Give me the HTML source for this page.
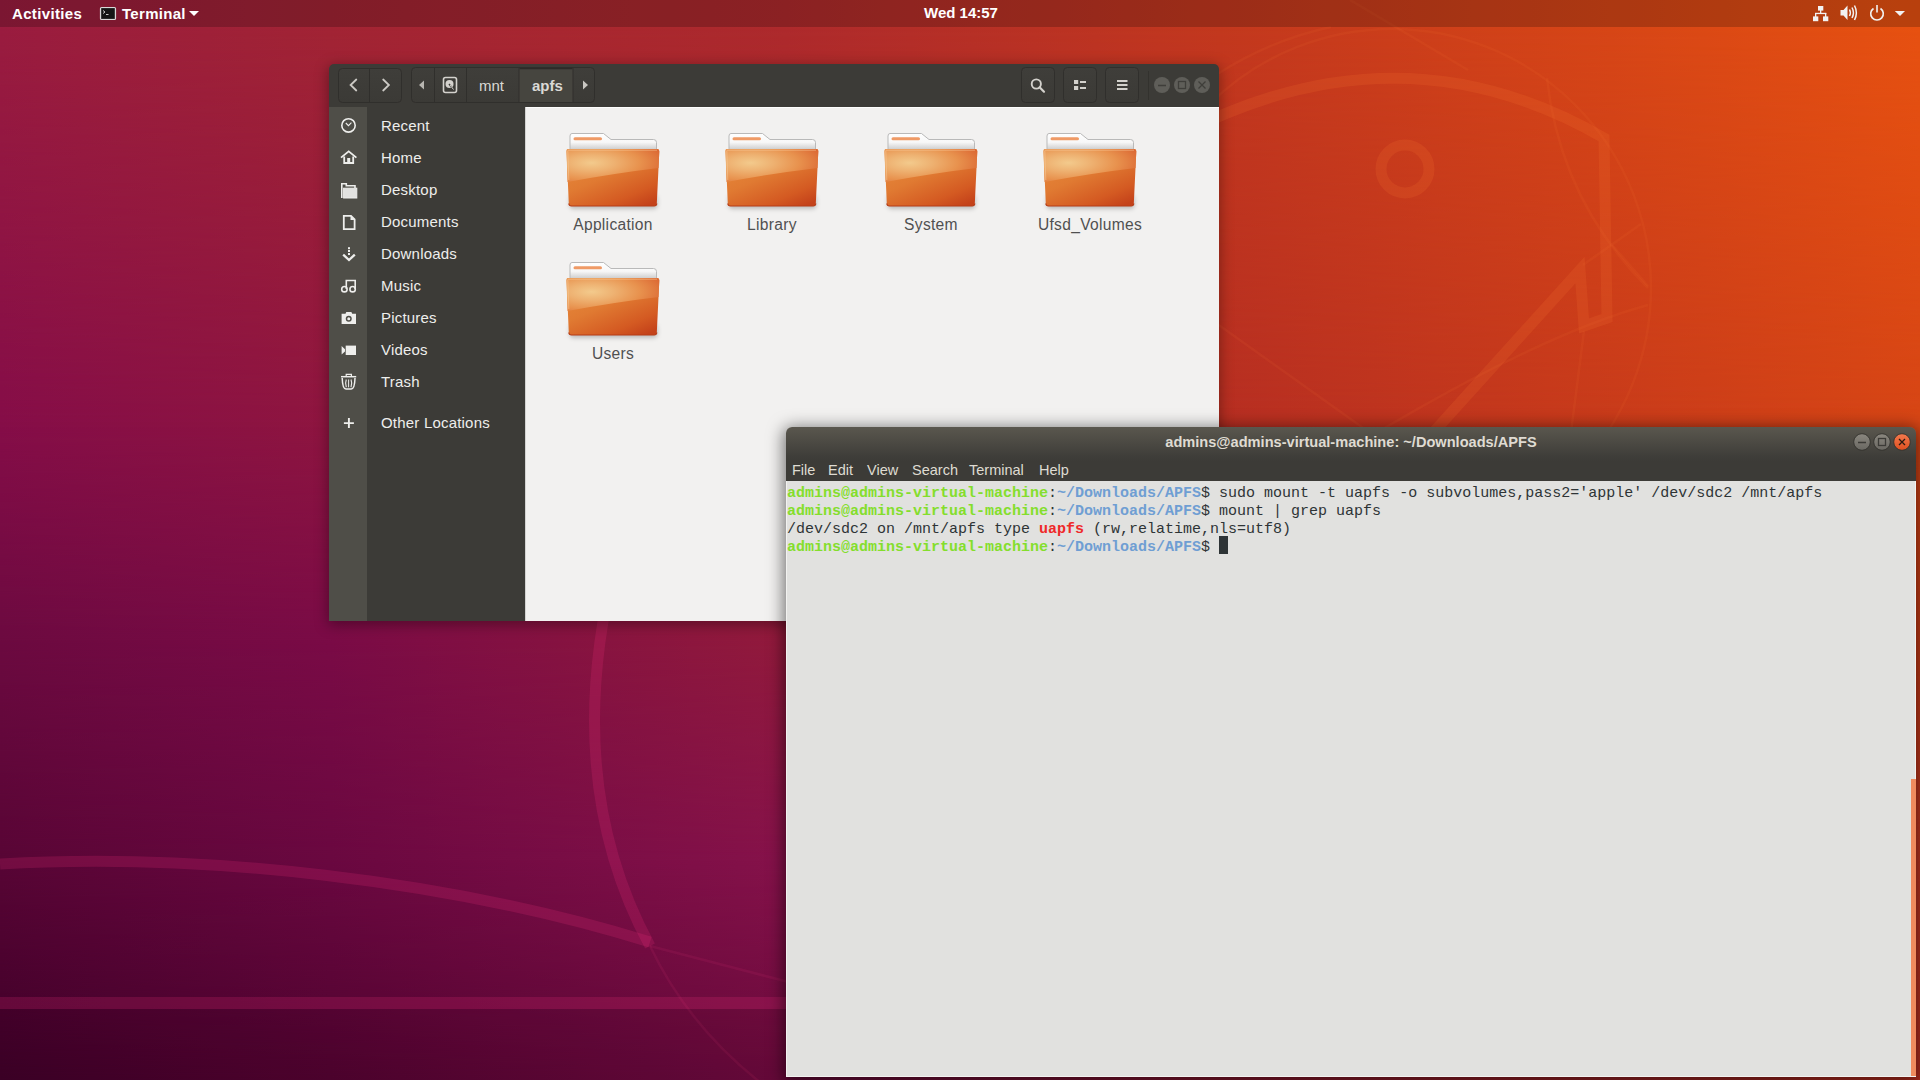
<!DOCTYPE html>
<html><head><meta charset="utf-8">
<style>
*{margin:0;padding:0;box-sizing:border-box}
html,body{width:1920px;height:1080px;overflow:hidden}
body{position:relative;font-family:"Liberation Sans",sans-serif;background:#8a1a3a}
svg{display:block}
#wall{position:absolute;left:0;top:0}
#topbar{position:absolute;left:0;top:0;width:1920px;height:27px;background:rgba(0,0,0,0.2);color:#fff;font-weight:bold;font-size:15px}
#topbar span{position:absolute;top:5px;white-space:nowrap;line-height:17px}
#topicons{position:absolute;left:0;top:0}
/* file manager */
#fm{position:absolute;left:329px;top:64px;width:890px;height:557px;border-radius:5px 5px 0 0;overflow:hidden}
#fmshadow{position:absolute;left:329px;top:64px;width:890px;height:557px;border-radius:5px 5px 0 0;box-shadow:0 3px 14px 1px rgba(0,0,0,0.35)}
#fmhead{position:absolute;left:0;top:0;width:890px;height:43px;background:#3c3b37}
#fmside{position:absolute;left:0;top:43px;width:196px;height:514px;background:#3c3b37}
#fmicons{position:absolute;left:0;top:0;width:38px;height:514px;background:#4f4e48}
#fmcontent{position:absolute;left:196px;top:43px;width:694px;height:514px;background:#f2f1f0}
.side-item{position:absolute;left:52px;font-size:15px;letter-spacing:0.2px;color:#eeeeec;white-space:nowrap;line-height:18px}
.flabel{position:absolute;width:160px;text-align:center;font-size:15.6px;letter-spacing:0.3px;color:#505050;line-height:18px;white-space:nowrap}
.pb{position:absolute;top:14px;font-size:15px;color:#dad9d5;line-height:18px;white-space:nowrap}
#fmsvg{position:absolute;left:0;top:0}
/* terminal */
#termshadow{position:absolute;left:786px;top:427px;width:1130px;height:650px;border-radius:6px 6px 0 0;box-shadow:0 3px 16px 3px rgba(0,0,0,0.5)}
#term{position:absolute;left:786px;top:427px;width:1130px;height:650px;border-radius:6px 6px 0 0;overflow:hidden}
#termhead{position:absolute;left:0;top:0;width:1130px;height:54px;background:linear-gradient(#5a574e,#3e3d39 30px,#3c3b37 34px,#3c3b37)}
#termbody{position:absolute;left:0;top:54px;width:1130px;height:596px;background:#e1e1df;border-left:1px solid #f2f2f0;border-bottom:1px solid #f2f2f0;border-right:1px solid #f2f2f0}
.ttitle{position:absolute;left:0;width:1130px;top:7px;text-align:center;color:#dfdbd2;font-weight:bold;font-size:14.6px;line-height:17px;white-space:nowrap}
.menu{position:absolute;top:35px;font-size:14.5px;color:#dfdbd2;line-height:17px;white-space:nowrap}
.tline{position:absolute;left:1px;font-family:"Liberation Mono",monospace;font-size:15px;white-space:pre;color:#2e3436;line-height:18px;height:18px}
.g{color:#84de2c;font-weight:bold}
.b{color:#6f9ed3;font-weight:bold}
.r{color:#ef2929;font-weight:bold}
</style></head><body>
<svg id="wall" width="1920" height="1080" viewBox="0 0 1920 1080">
<defs>
<linearGradient id="r0" x1="0" y1="0" x2="1920" y2="0" gradientUnits="userSpaceOnUse"><stop offset="0.0000" stop-color="#9a1c3f"/><stop offset="0.1719" stop-color="#a22434"/><stop offset="0.4094" stop-color="#ae2a2c"/><stop offset="0.6354" stop-color="#c3381e"/><stop offset="1.0000" stop-color="#e75111"/></linearGradient>
<linearGradient id="r1" x1="0" y1="0" x2="1920" y2="0" gradientUnits="userSpaceOnUse"><stop offset="0.0000" stop-color="#850d48"/><stop offset="0.1719" stop-color="#8e1540"/><stop offset="0.4094" stop-color="#a0222f"/><stop offset="0.6354" stop-color="#b62e22"/><stop offset="1.0000" stop-color="#d64515"/></linearGradient>
<linearGradient id="r2" x1="0" y1="0" x2="1920" y2="0" gradientUnits="userSpaceOnUse"><stop offset="0.0000" stop-color="#6c0a40"/><stop offset="0.1719" stop-color="#7a0b46"/><stop offset="0.4094" stop-color="#921a3c"/><stop offset="0.6354" stop-color="#a82a26"/><stop offset="1.0000" stop-color="#c43a16"/></linearGradient>
<linearGradient id="r3" x1="0" y1="0" x2="1920" y2="0" gradientUnits="userSpaceOnUse"><stop offset="0.0000" stop-color="#580535"/><stop offset="0.1719" stop-color="#6a0840"/><stop offset="0.4094" stop-color="#86124a"/><stop offset="0.6354" stop-color="#a02038"/><stop offset="1.0000" stop-color="#bc3420"/></linearGradient>
<linearGradient id="r4" x1="0" y1="0" x2="1920" y2="0" gradientUnits="userSpaceOnUse"><stop offset="0.0000" stop-color="#3e0028"/><stop offset="0.1719" stop-color="#50032f"/><stop offset="0.4094" stop-color="#6a0a3c"/><stop offset="0.6354" stop-color="#8a1830"/><stop offset="1.0000" stop-color="#b02c1e"/></linearGradient>
<linearGradient id="m1g" x1="0" y1="27" x2="0" y2="427" gradientUnits="userSpaceOnUse"><stop offset="0" stop-color="#fff" stop-opacity="0"/><stop offset="1" stop-color="#fff" stop-opacity="1"/></linearGradient>
<mask id="m1" maskUnits="userSpaceOnUse" x="0" y="0" width="1920" height="1080"><rect x="0" y="27" width="1920" height="1053" fill="url(#m1g)"/></mask>
<linearGradient id="m2g" x1="0" y1="427" x2="0" y2="640" gradientUnits="userSpaceOnUse"><stop offset="0" stop-color="#fff" stop-opacity="0"/><stop offset="1" stop-color="#fff" stop-opacity="1"/></linearGradient>
<mask id="m2" maskUnits="userSpaceOnUse" x="0" y="0" width="1920" height="1080"><rect x="0" y="427" width="1920" height="653" fill="url(#m2g)"/></mask>
<linearGradient id="m3g" x1="0" y1="640" x2="0" y2="860" gradientUnits="userSpaceOnUse"><stop offset="0" stop-color="#fff" stop-opacity="0"/><stop offset="1" stop-color="#fff" stop-opacity="1"/></linearGradient>
<mask id="m3" maskUnits="userSpaceOnUse" x="0" y="0" width="1920" height="1080"><rect x="0" y="640" width="1920" height="440" fill="url(#m3g)"/></mask>
<linearGradient id="m4g" x1="0" y1="860" x2="0" y2="1080" gradientUnits="userSpaceOnUse"><stop offset="0" stop-color="#fff" stop-opacity="0"/><stop offset="1" stop-color="#fff" stop-opacity="1"/></linearGradient>
<mask id="m4" maskUnits="userSpaceOnUse" x="0" y="0" width="1920" height="1080"><rect x="0" y="860" width="1920" height="220" fill="url(#m4g)"/></mask>
</defs>
<rect width="1920" height="1080" fill="url(#r0)"/>
<rect x="0" y="27" width="1920" height="1053" fill="url(#r1)" mask="url(#m1)"/>
<rect x="0" y="427" width="1920" height="653" fill="url(#r2)" mask="url(#m2)"/>
<rect x="0" y="640" width="1920" height="440" fill="url(#r3)" mask="url(#m3)"/>
<rect x="0" y="860" width="1920" height="220" fill="url(#r4)" mask="url(#m4)"/>

<g>
<g fill="none" stroke="rgb(255,128,51)" stroke-opacity="0.15" stroke-width="11" stroke-linejoin="miter">
<path d="M 1180,135 Q 1400,20 1604,138 L 1607,318 L 1584,326 L 1580,270 L 1300,580"/>
<circle cx="1405" cy="169" r="24"/>
</g>
<g fill="none" stroke="rgb(255,55,133)" stroke-opacity="0.17" stroke-width="11" stroke-linejoin="miter">
<path d="M 0,864 C 200,852 450,880 650,942"/>
<path d="M 616,560 Q 560,780 650,946"/>
<path d="M -10,1003 L 1800,1003" stroke-width="12"/>
</g>
<g fill="none" stroke="rgb(255,128,58)" stroke-opacity="0.085" stroke-width="2.5">
<circle cx="1392" cy="288" r="259"/>
<path d="M 1547,78 Q 1560,200 1648,288"/>
<path d="M 1641,224 L 1583,265"/>
<path d="M 1612,245 L 1648,286"/>
<path d="M 1648,305 Q 1520,340 1300,480"/>
<path d="M 1584,331 L 1570,440"/>
<path d="M 1216,75 Q 1270,40 1331,27"/>
<path d="M 1216,323 L 1380,440"/>
<path d="M 1350,0 L 1468,70"/>
</g>
<g fill="none" stroke="rgb(255,64,128)" stroke-opacity="0.09" stroke-width="2.5">
<path d="M 650,946 L 800,985"/>
<path d="M 650,946 Q 690,1030 770,1090"/>
</g>
</g>
<rect x="0" y="1009" width="1800" height="71" fill="#000" fill-opacity="0.05"/>
</svg>

<div id="topbar">
<span style="left:12px;letter-spacing:0.35px">Activities</span>
<span style="left:122px;letter-spacing:0.3px">Terminal</span>
<span style="left:924px;top:4px">Wed 14:57</span>
</div>
<svg id="topicons" width="1920" height="27" viewBox="0 0 1920 27">
<!-- terminal app icon -->
<rect x="100.5" y="7.5" width="15" height="12" rx="1" fill="#2a2a2a" stroke="#d8d8d8" stroke-width="1.2"/>
<rect x="102" y="9" width="12" height="9" fill="#161616"/>
<path d="M103,10.5 L105,12 L103,13.5" stroke="#ddd" stroke-width="0.9" fill="none"/>
<path d="M106,14.5 H108.5" stroke="#ddd" stroke-width="0.9"/>
<path d="M189,11 L199,11 L194,16 Z" fill="#fff"/>
<!-- network -->
<g fill="#f2f2f2">
<rect x="1818" y="6" width="5.3" height="4.6"/>
<rect x="1813" y="16.4" width="5.3" height="4.8"/>
<rect x="1823" y="16.4" width="5.3" height="4.8"/>
<rect x="1820" y="10" width="1.3" height="3.5"/>
<rect x="1815" y="12.8" width="11.3" height="1.3"/>
<rect x="1815" y="13" width="1.3" height="4"/>
<rect x="1825" y="13" width="1.3" height="4"/>
</g>
<!-- volume -->
<path d="M1840.5,10 H1843.5 L1847.5,5.5 V20 L1843.5,15.5 H1840.5 Z" fill="#f2f2f2"/>
<path d="M1849.5,9.5 Q1851.2,12.7 1849.5,16" stroke="#f2f2f2" stroke-width="1.5" fill="none"/>
<path d="M1852,7.5 Q1854.8,12.7 1852,18" stroke="#f2f2f2" stroke-width="1.5" fill="none"/>
<path d="M1854.5,5.5 Q1858.2,12.7 1854.5,20" stroke="#f2f2f2" stroke-width="1.5" fill="none"/>
<!-- power -->
<path d="M1873.5,8.5 A6.3,6.3 0 1 0 1880.5,8.5" stroke="#f2f2f2" stroke-width="1.6" fill="none"/>
<path d="M1877,5 V12.5" stroke="#f2f2f2" stroke-width="1.6"/>
<path d="M1894.8,11 L1905,11 L1900,16 Z" fill="#f2f2f2"/>
</svg>

<div id="fmshadow"></div>
<div id="fm">
<div id="fmhead"></div>
<div id="fmside"><div id="fmicons"></div></div>
<div id="fmcontent"></div>
<svg id="fmsvg" width="890" height="557" viewBox="329 64 890 557">
<defs>
<linearGradient id="btng" x1="0" y1="0" x2="0" y2="1"><stop offset="0" stop-color="#3f3e3a"/><stop offset="1" stop-color="#3b3a36"/></linearGradient>
<radialGradient id="fhl" cx="0.27" cy="0.42" r="0.8">
<stop offset="0" stop-color="#f3ca8c"/><stop offset="0.3" stop-color="#eeb272"/><stop offset="0.65" stop-color="#e8924e"/><stop offset="1" stop-color="#dc6a34"/>
</radialGradient>
<linearGradient id="flow" x1="0.15" y1="0" x2="0.85" y2="1">
<stop offset="0" stop-color="#e88c3c"/><stop offset="0.45" stop-color="#e07a32"/><stop offset="0.8" stop-color="#d45a22"/><stop offset="1" stop-color="#c4421a"/>
</linearGradient>
<linearGradient id="fpaper" x1="0" y1="0" x2="0" y2="1"><stop offset="0" stop-color="#ffffff"/><stop offset="0.3" stop-color="#f7f7f7"/><stop offset="0.53" stop-color="#cfcfcf"/><stop offset="1" stop-color="#b0b0b0"/></linearGradient>
<filter id="fblur" x="-20%" y="-50%" width="140%" height="200%"><feGaussianBlur stdDeviation="2"/></filter>
<symbol id="folder" viewBox="0 0 94 82" width="94" height="82" overflow="visible">
<rect x="3" y="62" width="88" height="14" rx="4" fill="#000" fill-opacity="0.22" filter="url(#fblur)"/>
<path d="M5.5,0.5 H37 L44.5,6.5 H87 Q90,6.5 90,9.5 V30 H3.5 V3 Q3.5,0.5 5.5,0.5 Z" fill="url(#fpaper)" stroke="#b9b9b9" stroke-width="1"/>
<rect x="7" y="4.2" width="28.5" height="3" rx="1.5" fill="#ef9a66"/>
<path d="M1.5,16 H91 Q93,16 92.8,18.5 L90.3,70.5 Q90.1,73 87.6,73 H5 Q2.5,73 2.3,70.5 L0,18.5 Q-0.2,16 1.5,16 Z" fill="url(#flow)"/>
<path d="M1.5,16 H91 Q93,16 92.8,18.5 L92,35 Q50,40 1,49 L0,18.5 Q-0.2,16 1.5,16 Z" fill="url(#fhl)"/>
<path d="M2.3,70.5 Q2.5,73 5,73 H87.6 Q90.1,73 90.3,70.5" fill="none" stroke="#b73c16" stroke-width="1.2"/>
<path d="M2.3,47 L1.3,18 Q1.3,17.2 2.2,17.2 H90.5" fill="none" stroke="#f8c898" stroke-opacity="0.55" stroke-width="1"/>
</symbol>
</defs>
<!-- nav buttons -->
<rect x="338.5" y="68.5" width="63" height="34" rx="4" fill="url(#btng)" stroke="#302f2c"/>
<line x1="369.5" y1="69" x2="369.5" y2="102" stroke="#302f2c"/>
<path d="M356.3,79.5 L350.6,85 L356.3,90.5" fill="none" stroke="#cbc9c4" stroke-width="1.8" stroke-linecap="round"/>
<path d="M383.2,79.5 L388.9,85 L383.2,90.5" fill="none" stroke="#cbc9c4" stroke-width="1.8" stroke-linecap="round"/>
<!-- path bar -->
<rect x="411.5" y="67.5" width="183" height="35" rx="4" fill="url(#btng)" stroke="#302f2c"/>
<rect x="519" y="68" width="54" height="34" fill="#46453f"/>
<line x1="519.5" y1="68.5" x2="572.5" y2="68.5" stroke="#2c2b28" stroke-width="1.5"/>
<line x1="434.5" y1="68" x2="434.5" y2="102" stroke="#302f2c"/>
<line x1="466.5" y1="68" x2="466.5" y2="102" stroke="#302f2c"/>
<line x1="519" y1="68" x2="519" y2="102" stroke="#302f2c"/>
<line x1="573" y1="68" x2="573" y2="102" stroke="#302f2c"/>
<path d="M424,80.5 L419,85 L424,89.5 Z" fill="#b7b5b0"/>
<path d="M583,80.5 L588,85 L583,89.5 Z" fill="#c8c6c1"/>
<rect x="443.5" y="77.5" width="13" height="15" rx="2" fill="none" stroke="#d4d2cd" stroke-width="1.6"/>
<circle cx="449.5" cy="84" r="4" fill="#d4d2cd"/>
<path d="M449,84 L453,89" stroke="#3c3b37" stroke-width="1.4"/>
<path d="M450,85 L453.5,89.5" stroke="#d4d2cd" stroke-width="1"/>
<!-- right buttons -->
<rect x="1021.5" y="67.5" width="33" height="35" rx="4" fill="url(#btng)" stroke="#302f2c"/>
<rect x="1063.5" y="67.5" width="33" height="35" rx="4" fill="url(#btng)" stroke="#302f2c"/>
<rect x="1105.5" y="67.5" width="33" height="35" rx="4" fill="url(#btng)" stroke="#302f2c"/>
<circle cx="1036.3" cy="84" r="4.6" fill="none" stroke="#d3d1cc" stroke-width="1.9"/>
<path d="M1039.6,87.3 L1044,91.7" stroke="#d3d1cc" stroke-width="2.2" stroke-linecap="round"/>
<g fill="#d3d1cc">
<rect x="1074" y="80" width="4.2" height="4"/><rect x="1074" y="86" width="4.2" height="4"/>
<rect x="1080" y="81" width="6" height="2"/><rect x="1080" y="87" width="6" height="2"/>
<rect x="1117" y="80" width="10.5" height="2"/><rect x="1117" y="84" width="10.5" height="2"/><rect x="1117" y="88" width="10.5" height="2"/>
</g>
<line x1="1148.5" y1="71" x2="1148.5" y2="100" stroke="#33322e"/>
<g fill="#5f5e59"><circle cx="1162" cy="85" r="8"/><circle cx="1182" cy="85" r="8"/><circle cx="1202" cy="85" r="8"/></g>
<g stroke="#3f3e3a" stroke-width="1.3" fill="none">
<path d="M1158,85.5 H1166"/><rect x="1178.5" y="81.5" width="7" height="7"/><path d="M1198.5,81.5 L1205.5,88.5 M1205.5,81.5 L1198.5,88.5"/>
</g>
<!-- content border -->
<line x1="525" y1="107.5" x2="1219" y2="107.5" stroke="#fdfdfc"/><line x1="525.5" y1="107" x2="525.5" y2="621" stroke="#d3d3d1"/>
<!-- folders -->
<use href="#folder" x="566.5" y="133"/>
<use href="#folder" x="725.5" y="133"/>
<use href="#folder" x="884.5" y="133"/>
<use href="#folder" x="1043.5" y="133"/>
<use href="#folder" x="566.5" y="262"/>
<!-- sidebar icons -->
<circle cx="348.5" cy="125.4" r="6.7" fill="none" stroke="#eeeeec" stroke-width="1.6"/>
<path d="M345.8,123 L348.5,125.7 L351.4,122.7" fill="none" stroke="#eeeeec" stroke-width="1.1"/>
<path d="M341,157.6 L348.7,151.3 L356.4,157.6" fill="none" stroke="#eeeeec" stroke-width="1.8" stroke-linejoin="miter"/>
<path d="M344.2,156.5 V163 H353.2 V156.5" fill="none" stroke="#eeeeec" stroke-width="1.8"/>
<rect x="347.2" y="158" width="3" height="5.5" fill="#eeeeec"/>
<path d="M341.8,183.8 H346.3 V185.8 H355 V188" fill="none" stroke="#eeeeec" stroke-width="1.6"/>
<path d="M341.8,183 V198" stroke="#eeeeec" stroke-width="1.6"/>
<rect x="343.6" y="188.2" width="13.2" height="9.8" fill="#e2e2e0" stroke="#eeeeec" stroke-width="1"/>
<path d="M343.8,215.8 H351 L354.6,219.4 V229.2 H343.8 Z" fill="none" stroke="#eeeeec" stroke-width="1.8" stroke-linejoin="miter"/>
<path d="M350.5,215.8 L354.6,219.9 H350.5 Z" fill="#eeeeec"/>
<g fill="#eeeeec">
<rect x="348" y="247.2" width="2" height="2"/><rect x="348" y="250" width="2" height="2"/><rect x="348" y="253" width="2" height="2"/>
</g>
<path d="M343.2,254.6 L349,260 L354.8,254.6" fill="none" stroke="#eeeeec" stroke-width="2.3"/>
<g fill="none" stroke="#eeeeec" stroke-width="1.6">
<circle cx="344.4" cy="289.2" r="2.7"/><circle cx="352.6" cy="289.2" r="2.7"/>
<path d="M346.3,289 V280.5 H355.2 V289"/>
</g>
<path d="M341.6,313.8 H345.5 L346.3,312 H351.4 L352.2,313.8 H356 V324 H341.6 Z" fill="#eeeeec"/>
<circle cx="348.75" cy="318.8" r="3" fill="#4f4e48"/><circle cx="348.75" cy="318.8" r="1.5" fill="#eeeeec"/>
<path d="M341.6,346 L345,349.2 V351.6 L341.6,354.6 Z" fill="#eeeeec"/>
<rect x="345.7" y="345.6" width="10.3" height="9.4" fill="#eeeeec"/>
<g fill="none" stroke="#eeeeec" stroke-width="1.5">
<path d="M341,376.7 H356.2"/><path d="M346.2,376.5 V374.4 H351.4 V376.5" stroke-width="1.2"/>
<path d="M342.2,378 Q342.5,389 346,389 H351.2 Q354.7,389 355,378"/>
<path d="M346.3,379.5 Q344.8,383.4 346.3,387.3 M351,379.5 Q352.5,383.4 351,387.3" stroke-width="1.1"/>
<path d="M348.6,379.5 V387.3" stroke-width="1"/>
</g>
<path d="M348.9,418.1 V428.1 M343.9,423.1 H353.9" stroke="#eeeeec" stroke-width="1.9"/>
</svg>
<div class="pb" style="left:150px;top:13px">mnt</div>
<div class="pb" style="left:203px;top:13px;font-weight:bold">apfs</div>
<div class="side-item" style="top:53px">Recent</div>
<div class="side-item" style="top:85px">Home</div>
<div class="side-item" style="top:117px">Desktop</div>
<div class="side-item" style="top:149px">Documents</div>
<div class="side-item" style="top:181px">Downloads</div>
<div class="side-item" style="top:213px">Music</div>
<div class="side-item" style="top:245px">Pictures</div>
<div class="side-item" style="top:277px">Videos</div>
<div class="side-item" style="top:309px">Trash</div>
<div class="side-item" style="top:350px">Other Locations</div>
<div class="flabel" style="left:204px;top:152px">Application</div>
<div class="flabel" style="left:363px;top:152px">Library</div>
<div class="flabel" style="left:522px;top:152px">System</div>
<div class="flabel" style="left:681px;top:152px">Ufsd_Volumes</div>
<div class="flabel" style="left:204px;top:281px">Users</div>
</div>

<div id="termshadow"></div>
<div id="term">
<div id="termhead"></div>
<div id="termbody"></div>
<div class="ttitle">admins@admins-virtual-machine: ~/Downloads/APFS</div>
<svg style="position:absolute;left:0;top:0" width="1130" height="54" viewBox="786 427 1130 54">
<defs>
<linearGradient id="wbg" x1="0" y1="0" x2="0" y2="1"><stop offset="0" stop-color="#8a877f"/><stop offset="1" stop-color="#6a6862"/></linearGradient>
<linearGradient id="wbc" x1="0" y1="0" x2="0" y2="1"><stop offset="0" stop-color="#f27a4e"/><stop offset="1" stop-color="#df4f1f"/></linearGradient>
</defs>
<circle cx="1862" cy="442" r="8.3" fill="url(#wbg)" stroke="#33322e" stroke-width="0.9"/>
<circle cx="1882" cy="442" r="8.3" fill="url(#wbg)" stroke="#33322e" stroke-width="0.9"/>
<circle cx="1902" cy="442" r="8.3" fill="url(#wbc)" stroke="#33322e" stroke-width="0.9"/>
<path d="M1858,442.5 H1866" stroke="#3c3b37" stroke-width="1.4"/>
<rect x="1878.5" y="438.5" width="7" height="7" fill="none" stroke="#3c3b37" stroke-width="1.3"/>
<path d="M1899,439 L1905,445 M1905,439 L1899,445" stroke="#2a1a12" stroke-width="1.3"/>
</svg>
<div class="menu" style="left:6px">File</div>
<div class="menu" style="left:42px">Edit</div>
<div class="menu" style="left:81px">View</div>
<div class="menu" style="left:126px">Search</div>
<div class="menu" style="left:183px">Terminal</div>
<div class="menu" style="left:253px">Help</div>
<div class="tline" style="top:58px"><span class="g">admins@admins-virtual-machine</span>:<span class="b">~/Downloads/APFS</span>$ sudo mount -t uapfs -o subvolumes,pass2='apple' /dev/sdc2 /mnt/apfs</div>
<div class="tline" style="top:76px"><span class="g">admins@admins-virtual-machine</span>:<span class="b">~/Downloads/APFS</span>$ mount | grep uapfs</div>
<div class="tline" style="top:94px">/dev/sdc2 on /mnt/apfs type <span class="r">uapfs</span> (rw,relatime,nls=utf8)</div>
<div class="tline" style="top:112px"><span class="g">admins@admins-virtual-machine</span>:<span class="b">~/Downloads/APFS</span>$ </div>
<div style="position:absolute;left:433px;top:109px;width:9px;height:18px;background:#2e3436"></div>
<div style="position:absolute;left:1125px;top:352px;width:5px;height:297px;background:#ef8b5e"></div>
</div>
</body></html>
